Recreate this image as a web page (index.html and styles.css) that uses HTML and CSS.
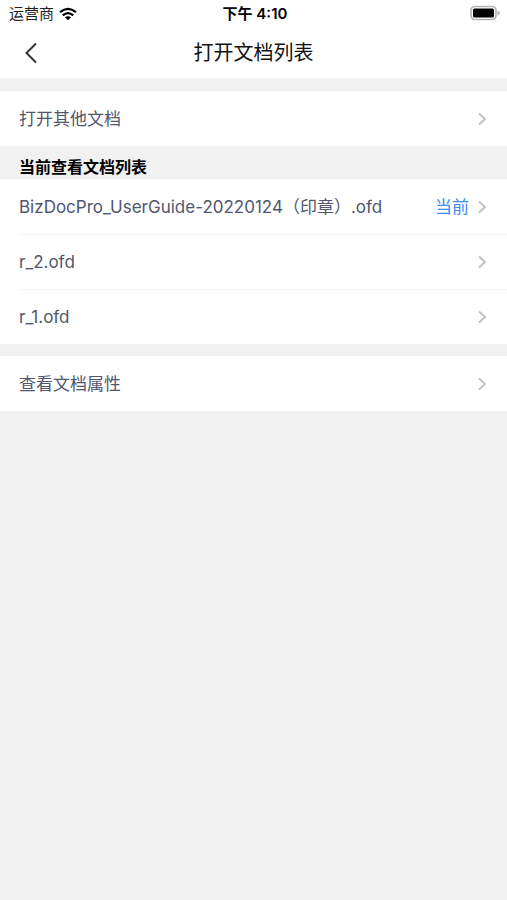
FILE: index.html
```html
<!DOCTYPE html>
<html lang="zh-CN">
<head>
<meta charset="utf-8">
<meta name="viewport" content="width=device-width, initial-scale=1">
<title>打开文档列表</title>
<link rel="stylesheet" href="styles.css">
</head>
<body>
<header class="top">
  <div class="status">
    <div class="carrier">
      <span>运营商</span>
      <svg class="wifi" viewBox="0 0 18 14" aria-hidden="true">
        <path d="M1 5.200Q9-1.500 17 5.200M3.800 8.300Q9 3.900 14.200 8.300" fill="none" stroke="#000" stroke-width="2.300"/>
        <path d="M5.900 10.300Q9 8 12.100 10.300L9 13.300Z"/>
      </svg>
    </div>
    <time class="clock">下午 4:10</time>
    <svg class="battery" viewBox="0 0 32 16" aria-hidden="true">
      <rect x="2" y="1.500" width="25" height="13" rx="4" fill="#fff" stroke="#b4b4b4" stroke-width="1.700"/>
      <rect x="4" y="3.500" width="21" height="9" rx="1.500"/>
      <path d="M28.500 5.500Q31 6.500 31 8T28.500 10.500Z" fill="#b4b4b4"/>
    </svg>
  </div>
  <nav class="bar">
    <button class="back" type="button" aria-label="返回">
      <svg viewBox="0 0 12 22" aria-hidden="true"><path d="M11 1.500L1.500 11L11 20.500"/></svg>
    </button>
    <h1 class="title">打开文档列表</h1>
  </nav>
</header>
<main>
  <a class="row" href="#open">
    <span class="name">打开其他文档</span>
    <svg class="chevron" viewBox="0 0 8 14" aria-hidden="true"><path d="M1 1.500L7 7L1 12.500"/></svg>
  </a>
  <h2 class="heading">当前查看文档列表</h2>
  <ul class="list">
    <li><a class="row" href="#guide">
      <span class="name">BizDocPro_UserGuide-20220124（印章）.ofd</span>
      <span class="current">当前</span>
      <svg class="chevron" viewBox="0 0 8 14" aria-hidden="true"><path d="M1 1.500L7 7L1 12.500"/></svg>
    </a></li>
    <li><a class="row" href="#r2">
      <span class="name">r_2.ofd</span>
      <svg class="chevron" viewBox="0 0 8 14" aria-hidden="true"><path d="M1 1.500L7 7L1 12.500"/></svg>
    </a></li>
    <li><a class="row" href="#r1">
      <span class="name">r_1.ofd</span>
      <svg class="chevron" viewBox="0 0 8 14" aria-hidden="true"><path d="M1 1.500L7 7L1 12.500"/></svg>
    </a></li>
  </ul>
  <a class="row" href="#properties">
    <span class="name">查看文档属性</span>
    <svg class="chevron" viewBox="0 0 8 14" aria-hidden="true"><path d="M1 1.500L7 7L1 12.500"/></svg>
  </a>
</main>
</body>
</html>
```
FILE: styles.css
```css
* {
  box-sizing: border-box;
}

body {
  margin: 0;
  min-height: 100vh;
  background: #f1f1f1;
  color: #000;
  font-family: Inter, "Noto Sans CJK SC", sans-serif;
}

.top {
  margin-bottom: 13px;
  background: #fff;
}

.status {
  display: grid;
  grid-template-columns: 1fr auto 1fr;
  align-items: center;
  height: 28px;
  padding: 0 6px 0 9px;
  font-size: 15px;
  line-height: 28px;
}

.carrier {
  display: flex;
  align-items: center;
  gap: 5px;
  color: #222;
}

.wifi {
  width: 18px;
  height: 14px;
}

.clock {
  font-size: 15px;
  font-weight: 600;
}

.battery {
  justify-self: end;
  width: 32px;
  height: 16px;
  margin-bottom: 2px;
}

.bar {
  display: grid;
  grid-template-columns: 60px 1fr 60px;
  align-items: center;
  height: 50px;
}

.back {
  display: flex;
  align-items: center;
  height: 44px;
  padding: 0 0 0 25px;
  border: 0;
  background: none;
}

.back svg {
  width: 12px;
  height: 22px;
  fill: none;
  stroke: #333;
  stroke-width: 2;
}

.title {
  margin: 0;
  font-size: 20px;
  font-weight: 400;
  line-height: 28px;
  text-align: center;
  color: #111;
}

.row {
  display: flex;
  align-items: center;
  height: 55px;
  padding: 0 21px 0 19px;
  background: #fff;
  color: #50566e;
  font-size: 17px;
  line-height: 24px;
  text-decoration: none;
}

.name {
  flex: 1;
}

.current {
  margin-right: 9px;
  color: #3d8bf2;
}

.chevron {
  width: 8px;
  height: 14px;
  fill: none;
  stroke: #c0c2ca;
  stroke-width: 2;
}

.heading {
  margin: 0;
  padding: 9px 19px 0;
  font-size: 16px;
  font-weight: 700;
  line-height: 24px;
}

.list {
  margin: 0 0 12px;
  padding: 0;
  list-style: none;
  background: #fff;
}

.list li + li .row {
  margin-left: 19px;
  padding-left: 0;
  border-top: 1px solid #f3f4f5;
}
```
